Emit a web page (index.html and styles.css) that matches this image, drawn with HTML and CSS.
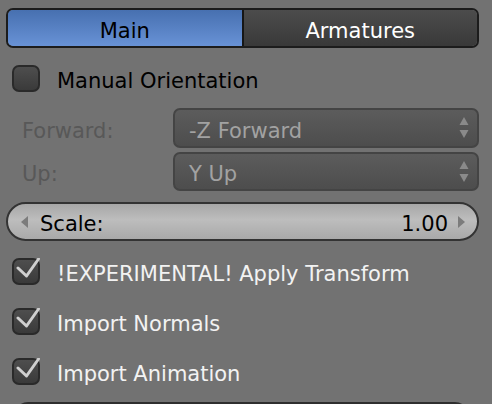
FILE: index.html
```html
<!DOCTYPE html>
<html>
<head>
<meta charset="utf-8">
<link rel="stylesheet" href="styles.css">
</head>
<body>
<div class="panel">
  <div class="tabs">
    <div class="tab tab-active">Main</div>
    <div class="tab tab-idle">Armatures</div>
  </div>

  <div class="check-row first">
    <span class="box"></span>
    <span class="check-label dark">Manual Orientation</span>
  </div>

  <div class="prop-row forward">
    <span class="prop-label">Forward:</span>
    <div class="select">
      <span class="select-text">-Z Forward</span>
      <svg class="updown" width="10" height="24" viewBox="0 0 10 24"><path d="M5 1 L9.5 9 L0.5 9 Z" fill="#8a8a8a"/><path d="M0.5 14 L9.5 14 L5 22 Z" fill="#8a8a8a"/></svg>
    </div>
  </div>
  <div class="prop-row up">
    <span class="prop-label">Up:</span>
    <div class="select">
      <span class="select-text">Y Up</span>
      <svg class="updown" width="10" height="24" viewBox="0 0 10 24"><path d="M5 1 L9.5 9 L0.5 9 Z" fill="#8a8a8a"/><path d="M0.5 14 L9.5 14 L5 22 Z" fill="#8a8a8a"/></svg>
    </div>
  </div>

  <div class="slider">
    <svg class="arrow" width="7" height="12" viewBox="0 0 7 12"><path d="M7 0 L7 12 L0 6 Z" fill="#7c7c7c"/></svg>
    <span class="slider-label">Scale:</span>
    <span class="slider-value">1.00</span>
    <svg class="arrow" width="7" height="12" viewBox="0 0 7 12"><path d="M0 0 L7 6 L0 12 Z" fill="#7c7c7c"/></svg>
  </div>

  <div class="check-row c1">
    <span class="box"><svg class="tick" width="28" height="24" viewBox="0 0 28 24"><path d="M6 10 L14.5 18 L26.5 1" fill="none" stroke="#d0d0d0" stroke-width="3" stroke-linecap="round" stroke-linejoin="round"/></svg></span>
    <span class="check-label light">!EXPERIMENTAL! Apply Transform</span>
  </div>
  <div class="check-row c2">
    <span class="box"><svg class="tick" width="28" height="24" viewBox="0 0 28 24"><path d="M6 10 L14.5 18 L26.5 1" fill="none" stroke="#d0d0d0" stroke-width="3" stroke-linecap="round" stroke-linejoin="round"/></svg></span>
    <span class="check-label light">Import Normals</span>
  </div>
  <div class="check-row c2">
    <span class="box"><svg class="tick" width="28" height="24" viewBox="0 0 28 24"><path d="M6 10 L14.5 18 L26.5 1" fill="none" stroke="#d0d0d0" stroke-width="3" stroke-linecap="round" stroke-linejoin="round"/></svg></span>
    <span class="check-label light">Import Animation</span>
  </div>

  <div class="next-widget"></div>
</div>
</body>
</html>
```

FILE: styles.css
```css
html, body {
  margin: 0;
  padding: 0;
  background: #727272;
  width: 492px;
  height: 404px;
  overflow: hidden;
}
.panel {
  padding: 8px 13px 0 6px;
  font-family: "DejaVu Sans", sans-serif;
  font-size: 21px;
}
.tabs {
  display: flex;
  height: 36px;
  border: 2px solid #1c1c1c;
  border-radius: 7px;
  overflow: hidden;
}
.tab {
  flex: 1 1 0;
  display: flex;
  align-items: center;
  justify-content: center;
  line-height: 1;
  padding-top: 6px;
}
.tab-active {
  background: linear-gradient(#4770b0, #6892d6);
  color: #000;
  border-right: 2px solid #161616;
}
.tab-idle {
  background: linear-gradient(#4c4c4c, #393939);
  color: #fff;
}
.check-row {
  display: flex;
  align-items: center;
  height: 28px;
}
.check-row.first { margin-top: 16px; }
.check-row.c1 { margin-top: 16px; }
.check-row.c2 { margin-top: 22px; }
.box {
  position: relative;
  box-sizing: border-box;
  width: 28px;
  height: 27px;
  margin-left: 6px;
  border: 2px solid #2a2a2a;
  border-radius: 7px;
  background: linear-gradient(#4e4e4e, #3a3a3a);
  flex: none;
}
.tick {
  position: absolute;
  left: -2px;
  top: -2px;
}
.check-label {
  margin-left: 17px;
  line-height: 1;
  padding-top: 6px;
}
.check-label.dark { color: #000; }
.check-label.light { color: #f2f2f2; }
.prop-row {
  display: flex;
  align-items: center;
  height: 40px;
}
.prop-row.forward { margin-top: 16px; }
.prop-row.up { margin-top: 4px; height: 39px; }
.prop-label {
  width: 167px;
  padding-left: 16px;
  padding-top: 6px;
  line-height: 1;
  box-sizing: border-box;
  color: #585858;
  flex: none;
}
.select {
  flex: 1;
  height: 100%;
  box-sizing: border-box;
  border: 2px solid #444;
  border-radius: 7px;
  background: linear-gradient(#5c5c5c, #4d4d4d);
  display: flex;
  align-items: center;
  justify-content: space-between;
  padding: 0 8px 0 14px;
}
.select-text { color: #a2a2a2; line-height: 1; padding-top: 6px; }
.updown { display: block; }
.slider {
  margin-top: 11px;
  height: 39px;
  box-sizing: border-box;
  border: 2px solid #333;
  border-radius: 20px;
  background: linear-gradient(#a7a7a7, #bdbdbd 45%, #a9a9a9);
  display: flex;
  align-items: center;
  padding: 0 12px 0 13px;
  color: #000;
}
.slider-label { margin-left: 12px; flex: 1; line-height: 1; padding-top: 6px; }
.slider-value { margin-right: 10px; line-height: 1; padding-top: 6px; }
.arrow { display: block; }
.next-widget {
  margin: 17px 10px 0 8px;
  height: 30px;
  border: 2px solid #2e2e2e;
  border-radius: 14px;
  background: #4a4a4a;
}
```
